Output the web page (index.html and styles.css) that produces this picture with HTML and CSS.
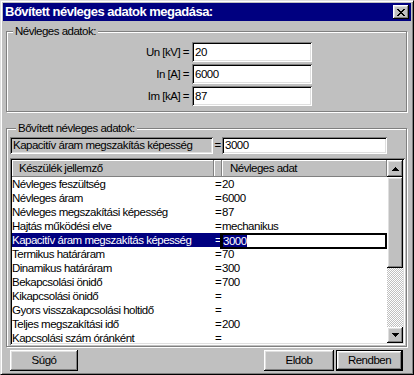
FILE: index.html
```html
<!DOCTYPE html>
<html lang="hu">
<head>
  <meta charset="UTF-8">
  <title>Bővített névleges adatok megadása</title>
  <link rel="stylesheet" href="styles.css">
</head>
<body>
  <div class="window">
    <div class="titlebar">
      <span class="title">Bővített névleges adatok megadása:</span>
      <div class="close raised">
        <svg width="8" height="7" viewBox="0 0 8 7" shape-rendering="crispEdges"><path d="M0 0h2v1H0zM6 0h2v1H6zM1 1h2v1H1zM5 1h2v1H5zM2 2h4v1H2zM3 3h2v1H3zM2 4h4v1H2zM1 5h2v1H1zM5 5h2v1H5zM0 6h2v1H0zM6 6h2v1H6z" fill="#000"/></svg>
      </div>
    </div>

    <div class="content">
      <!-- Névleges adatok -->
      <fieldset class="group">
        <legend>Névleges adatok:</legend>
        <div class="rated">
          <span class="field-label">Un [kV] =</span>
          <div class="edit sunken">20</div>
          <span class="field-label">In [A] =</span>
          <div class="edit sunken">6000</div>
          <span class="field-label">Im [kA] =</span>
          <div class="edit sunken">87</div>
        </div>
      </fieldset>

      <!-- Bővített névleges adatok -->
      <fieldset class="group extended">
        <legend>Bővített névleges adatok:</legend>
        <div class="current">
          <div class="current-name sunken">Kapacitív áram megszakítás képesség</div>
          <span class="current-eq">=</span>
          <div class="current-value sunken">3000</div>
        </div>

        <div class="table sunken">
          <div class="table-body">
            <div class="row head">
              <div class="c-name raised-flat">Készülék jellemző</div>
              <div class="c-eq raised-flat"></div>
              <div class="c-val raised-flat">Névleges adat</div>
            </div>
            <div class="row"><div class="c-name">Névleges feszültség</div><div class="c-eq">=</div><div class="c-val">20</div></div>
            <div class="row"><div class="c-name">Névleges áram</div><div class="c-eq">=</div><div class="c-val">6000</div></div>
            <div class="row"><div class="c-name">Névleges megszakítási képesség</div><div class="c-eq">=</div><div class="c-val">87</div></div>
            <div class="row"><div class="c-name">Hajtás működési elve</div><div class="c-eq">=</div><div class="c-val">mechanikus</div></div>
            <div class="row selected"><div class="c-name">Kapacitív áram megszakítás képesség</div><div class="c-eq">=</div><div class="c-val editing"><span class="sel">3000</span></div></div>
            <div class="row"><div class="c-name">Termikus határáram</div><div class="c-eq">=</div><div class="c-val">70</div></div>
            <div class="row"><div class="c-name">Dinamikus határáram</div><div class="c-eq">=</div><div class="c-val">300</div></div>
            <div class="row"><div class="c-name">Bekapcsolási önidő</div><div class="c-eq">=</div><div class="c-val">700</div></div>
            <div class="row"><div class="c-name">Kikapcsolási önidő</div><div class="c-eq">=</div><div class="c-val"></div></div>
            <div class="row"><div class="c-name">Gyors visszakapcsolási holtidő</div><div class="c-eq">=</div><div class="c-val"></div></div>
            <div class="row"><div class="c-name">Teljes megszakítási idő</div><div class="c-eq">=</div><div class="c-val">200</div></div>
            <div class="row"><div class="c-name">Kapcsolási szám óránként</div><div class="c-eq">=</div><div class="c-val"></div></div>
          </div>
          <div class="scrollbar">
            <div class="sb-btn sb-up raised">
              <svg width="7" height="4" viewBox="0 0 7 4" shape-rendering="crispEdges"><path d="M3 0h1v1H3zM2 1h3v1H2zM1 2h5v1H1zM0 3h7v1H0z" fill="#000"/></svg>
            </div>
            <div class="sb-thumb raised"></div>
            <div class="sb-track"></div>
            <div class="sb-btn sb-down raised">
              <svg width="7" height="4" viewBox="0 0 7 4" shape-rendering="crispEdges"><path d="M0 0h7v1H0zM1 1h5v1H1zM2 2h3v1H2zM3 3h1v1H3z" fill="#000"/></svg>
            </div>
          </div>
        </div>
      </fieldset>

      <div class="buttons">
        <div class="btn raised help">Súgó</div>
        <div class="btn raised cancel">Eldob</div>
        <div class="btn raised ok">Rendben</div>
      </div>
    </div>
  </div>
</body>
</html>
```

FILE: styles.css
```css
* { box-sizing: border-box; }
body { margin: 0; background: #c0c0c0; color: #000; font-family: "Liberation Sans", Arial, sans-serif; font-size: 11.5px; letter-spacing: -0.5px; }

/* window frame */
.window { width: 414px; height: 375px; padding: 2px; background: #c0c0c0; border: 1px solid; border-color: #dfdfdf #000 #000 #dfdfdf; box-shadow: inset 1px 1px #fff, inset -1px -1px #808080; }
.titlebar { height: 18px; background: #000080; color: #fff; display: flex; justify-content: space-between; align-items: flex-start; }
.title { font-weight: bold; font-size: 13px; letter-spacing: -0.5px; line-height: 18px; padding-left: 2px; }
.close { width: 16px; height: 14px; margin: 2px 2px 0 0; display: flex; align-items: center; justify-content: center; }

/* 3d helpers */
.raised { background: #c0c0c0; box-shadow: inset -1px -1px #000, inset 1px 1px #fff, inset -2px -2px #808080, inset 2px 2px #dfdfdf; }
.raised-flat { background: #c0c0c0; box-shadow: inset -1px -1px #808080, inset 1px 1px #fff; }
.sunken { box-shadow: inset 1px 1px #808080, inset -1px -1px #fff, inset 2px 2px #000, inset -2px -2px #dfdfdf; }

.content { padding: 4px 4px 0 3px; }

/* group boxes */
.group { margin: 0; padding: 0; min-width: 0; border: 1px solid #808080; box-shadow: 1px 1px #fff, inset 1px 1px #fff; }
.group legend { margin-left: 6px; padding: 0 2px; line-height: 13px; background: #c0c0c0; }

.rated { display: grid; grid-template-columns: 182px 120px; column-gap: 3px; row-gap: 2px; padding: 4px 0 5px; }
.field-label { text-align: right; line-height: 20px; }
.edit { height: 20px; line-height: 20px; padding-left: 3px; background: #fff; }

.extended { margin-top: 10px; padding: 2px 1px 1px 3px; }
.current { display: flex; height: 17px; line-height: 17px; }
.current-name { width: 203px; padding-left: 3px; background: #c0c0c0; white-space: nowrap; overflow: hidden; }
.current-eq { width: 9px; text-align: center; }
.current-value { width: 165px; padding-left: 3px; background: #fff; }

/* list grid */
.table { margin-top: 4px; height: 187px; padding: 2px; background: #fff; display: flex; }
.table-body { flex: 1; overflow: hidden; }
.row { display: flex; height: 14px; line-height: 14px; white-space: nowrap; }
.c-name { width: 202px; overflow: hidden; }
.c-eq { width: 8px; text-align: center; }
.c-val { flex: 1; }
.row.head { height: 17px; line-height: 16px; }
.head .c-name { padding-left: 7px; }
.head .c-val { padding-left: 8px; }
.selected .c-name, .selected .c-eq { background: #000080; color: #fff; }
.c-val.editing { height: 16px; margin-left: -2px; border: 2px solid #000; line-height: 12px; background: #fff; }
.sel { background: #000080; color: #fff; border-left: 1px solid #000; }

.scrollbar { width: 16px; display: flex; flex-direction: column; }
.sb-btn { display: flex; align-items: center; justify-content: center; }
.sb-up { height: 17px; }
.sb-thumb { height: 91px; }
.sb-track { flex: 1; background: repeating-conic-gradient(#fff 0 25%, #c0c0c0 0 50%) 0 0 / 2px 2px; }
.sb-down { height: 16px; }

/* bottom buttons */
.buttons { display: flex; padding: 3px 4px 0; }
.btn { height: 21px; line-height: 21px; text-align: center; }
.help { width: 68px; margin-right: auto; }
.cancel { width: 70px; }
.ok { width: 67px; margin-left: 2px; border: 1px solid #000; line-height: 19px; }
```
